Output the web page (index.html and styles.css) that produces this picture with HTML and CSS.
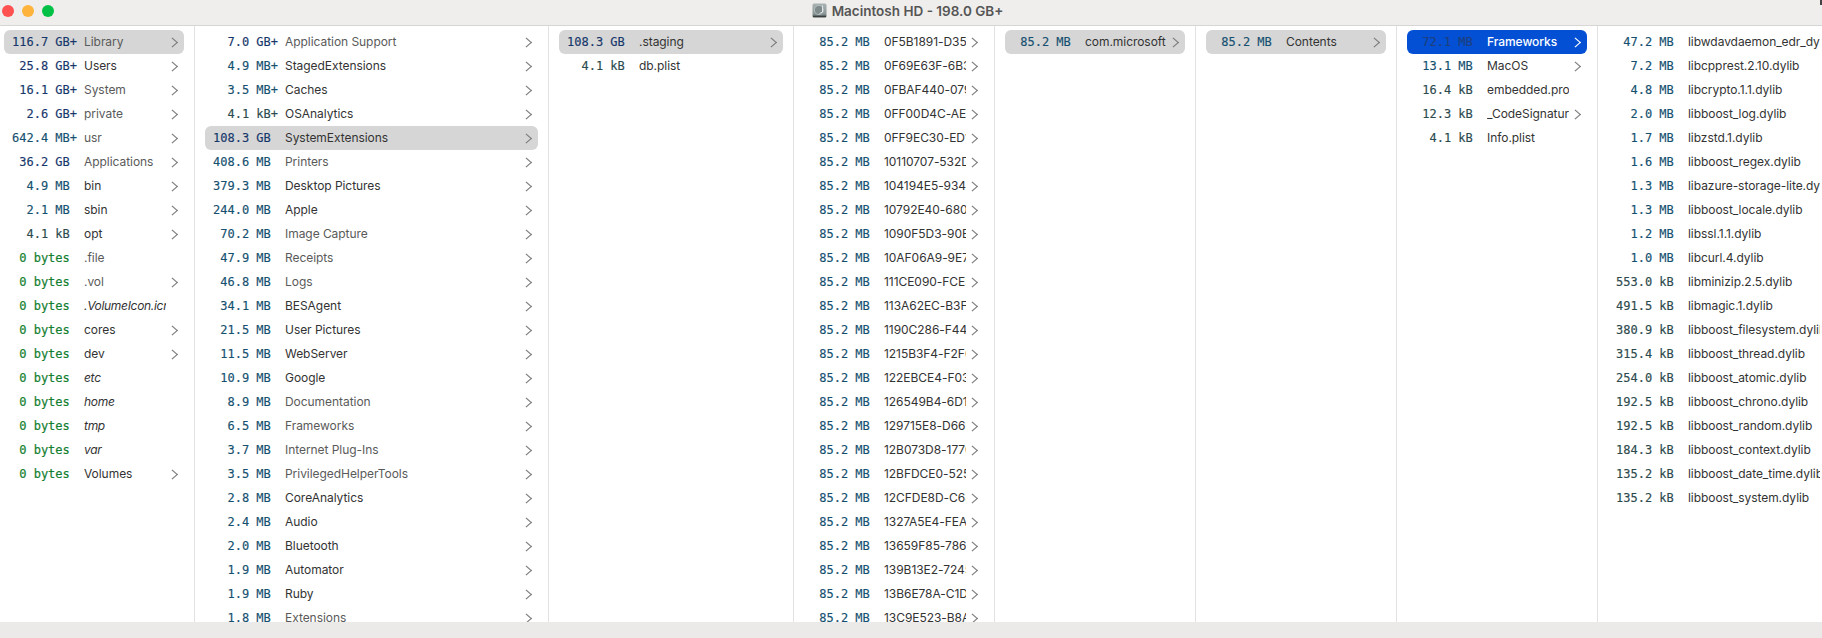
FILE: index.html
```html
<!DOCTYPE html>
<html lang="en">
<head>
<meta charset="utf-8">
<title>Macintosh HD - 198.0 GB+</title>
<link rel="stylesheet" href="styles.css">
</head>
<body>
<div class="window">
<header class="titlebar">
  <div class="lights"><span class="light red"></span><span class="light amber"></span><span class="light green"></span></div>
  <div class="title">
    <svg class="disk" width="15" height="15" viewBox="0 0 15 15"><defs><linearGradient id="dg" x1="0" y1="0" x2="0" y2="1"><stop offset="0" stop-color="#a9b3b3"/><stop offset=".75" stop-color="#8b9696"/><stop offset="1" stop-color="#4a5252"/></linearGradient></defs><rect x=".5" y=".5" width="14" height="14" rx="1.5" fill="url(#dg)"/><circle cx="7" cy="7" r="4.6" fill="#7f8a8a" stroke="#c2caca" stroke-width=".7"/><path d="M10.5 2.5V9L7.5 10.5" fill="none" stroke="#e2e6e6" stroke-width="1"/><rect x="1" y="12.8" width="13" height="1.2" fill="#3a4040"/></svg>
    <span>Macintosh HD - 198.0 GB+</span>
  </div>
  <span class="corner"></span>
</header>
<main class="browser">
<section class="col first">
<div class="row pill"><span class="size gb">116.7 GB+</span><span class="name dim">Library</span><i class="chev"></i></div>
<div class="row"><span class="size gb"> 25.8 GB+</span><span class="name">Users</span><i class="chev"></i></div>
<div class="row"><span class="size gb"> 16.1 GB+</span><span class="name dim">System</span><i class="chev"></i></div>
<div class="row"><span class="size gb">  2.6 GB+</span><span class="name dim">private</span><i class="chev"></i></div>
<div class="row"><span class="size mb">642.4 MB+</span><span class="name dim">usr</span><i class="chev"></i></div>
<div class="row"><span class="size gb"> 36.2 GB</span><span class="name dim">Applications</span><i class="chev"></i></div>
<div class="row"><span class="size mb">  4.9 MB</span><span class="name">bin</span><i class="chev"></i></div>
<div class="row"><span class="size mb">  2.1 MB</span><span class="name">sbin</span><i class="chev"></i></div>
<div class="row"><span class="size kb">  4.1 kB</span><span class="name">opt</span><i class="chev"></i></div>
<div class="row"><span class="size zero"> 0 bytes</span><span class="name dim">.file</span></div>
<div class="row"><span class="size zero"> 0 bytes</span><span class="name dim">.vol</span><i class="chev"></i></div>
<div class="row"><span class="size zero"> 0 bytes</span><span class="name it">.VolumeIcon.icns</span></div>
<div class="row"><span class="size zero"> 0 bytes</span><span class="name">cores</span><i class="chev"></i></div>
<div class="row"><span class="size zero"> 0 bytes</span><span class="name">dev</span><i class="chev"></i></div>
<div class="row"><span class="size zero"> 0 bytes</span><span class="name it">etc</span></div>
<div class="row"><span class="size zero"> 0 bytes</span><span class="name it">home</span></div>
<div class="row"><span class="size zero"> 0 bytes</span><span class="name it">tmp</span></div>
<div class="row"><span class="size zero"> 0 bytes</span><span class="name it">var</span></div>
<div class="row"><span class="size zero"> 0 bytes</span><span class="name">Volumes</span><i class="chev"></i></div>
</section>
<section class="col c2">
<div class="row"><span class="size gb">  7.0 GB+</span><span class="name dim">Application Support</span><i class="chev"></i></div>
<div class="row"><span class="size mb">  4.9 MB+</span><span class="name">StagedExtensions</span><i class="chev"></i></div>
<div class="row"><span class="size mb">  3.5 MB+</span><span class="name">Caches</span><i class="chev"></i></div>
<div class="row"><span class="size kb">  4.1 kB+</span><span class="name">OSAnalytics</span><i class="chev"></i></div>
<div class="row pill"><span class="size gb">108.3 GB</span><span class="name">SystemExtensions</span><i class="chev"></i></div>
<div class="row"><span class="size mb">408.6 MB</span><span class="name dim">Printers</span><i class="chev"></i></div>
<div class="row"><span class="size mb">379.3 MB</span><span class="name">Desktop Pictures</span><i class="chev"></i></div>
<div class="row"><span class="size mb">244.0 MB</span><span class="name">Apple</span><i class="chev"></i></div>
<div class="row"><span class="size mb"> 70.2 MB</span><span class="name dim">Image Capture</span><i class="chev"></i></div>
<div class="row"><span class="size mb"> 47.9 MB</span><span class="name dim">Receipts</span><i class="chev"></i></div>
<div class="row"><span class="size mb"> 46.8 MB</span><span class="name dim">Logs</span><i class="chev"></i></div>
<div class="row"><span class="size mb"> 34.1 MB</span><span class="name">BESAgent</span><i class="chev"></i></div>
<div class="row"><span class="size mb"> 21.5 MB</span><span class="name">User Pictures</span><i class="chev"></i></div>
<div class="row"><span class="size mb"> 11.5 MB</span><span class="name">WebServer</span><i class="chev"></i></div>
<div class="row"><span class="size mb"> 10.9 MB</span><span class="name">Google</span><i class="chev"></i></div>
<div class="row"><span class="size mb">  8.9 MB</span><span class="name dim">Documentation</span><i class="chev"></i></div>
<div class="row"><span class="size mb">  6.5 MB</span><span class="name dim">Frameworks</span><i class="chev"></i></div>
<div class="row"><span class="size mb">  3.7 MB</span><span class="name dim">Internet Plug-Ins</span><i class="chev"></i></div>
<div class="row"><span class="size mb">  3.5 MB</span><span class="name dim">PrivilegedHelperTools</span><i class="chev"></i></div>
<div class="row"><span class="size mb">  2.8 MB</span><span class="name">CoreAnalytics</span><i class="chev"></i></div>
<div class="row"><span class="size mb">  2.4 MB</span><span class="name">Audio</span><i class="chev"></i></div>
<div class="row"><span class="size mb">  2.0 MB</span><span class="name">Bluetooth</span><i class="chev"></i></div>
<div class="row"><span class="size mb">  1.9 MB</span><span class="name">Automator</span><i class="chev"></i></div>
<div class="row"><span class="size mb">  1.9 MB</span><span class="name">Ruby</span><i class="chev"></i></div>
<div class="row"><span class="size mb">  1.8 MB</span><span class="name dim">Extensions</span><i class="chev"></i></div>
</section>
<section class="col c3">
<div class="row pill"><span class="size gb">108.3 GB</span><span class="name">.staging</span><i class="chev"></i></div>
<div class="row"><span class="size kb">  4.1 kB</span><span class="name">db.plist</span></div>
</section>
<section class="col c4">
<div class="row"><span class="size mb"> 85.2 MB</span><span class="name">0F5B1891-D35A-4C10</span><i class="chev"></i></div>
<div class="row"><span class="size mb"> 85.2 MB</span><span class="name">0F69E63F-6B3C-4A21</span><i class="chev"></i></div>
<div class="row"><span class="size mb"> 85.2 MB</span><span class="name">0FBAF440-0795-4E32</span><i class="chev"></i></div>
<div class="row"><span class="size mb"> 85.2 MB</span><span class="name">0FF00D4C-AE77-4B43</span><i class="chev"></i></div>
<div class="row"><span class="size mb"> 85.2 MB</span><span class="name">0FF9EC30-ED15-4D54</span><i class="chev"></i></div>
<div class="row"><span class="size mb"> 85.2 MB</span><span class="name">10110707-532D-4F65</span><i class="chev"></i></div>
<div class="row"><span class="size mb"> 85.2 MB</span><span class="name">104194E5-9344-4A76</span><i class="chev"></i></div>
<div class="row"><span class="size mb"> 85.2 MB</span><span class="name">10792E40-680C-4B87</span><i class="chev"></i></div>
<div class="row"><span class="size mb"> 85.2 MB</span><span class="name">1090F5D3-90E1-4C98</span><i class="chev"></i></div>
<div class="row"><span class="size mb"> 85.2 MB</span><span class="name">10AF06A9-9E72-4DA9</span><i class="chev"></i></div>
<div class="row"><span class="size mb"> 85.2 MB</span><span class="name">111CE090-FCE3-4EB0</span><i class="chev"></i></div>
<div class="row"><span class="size mb"> 85.2 MB</span><span class="name">113A62EC-B3F4-4FC1</span><i class="chev"></i></div>
<div class="row"><span class="size mb"> 85.2 MB</span><span class="name">1190C286-F445-4AD2</span><i class="chev"></i></div>
<div class="row"><span class="size mb"> 85.2 MB</span><span class="name">1215B3F4-F2F6-4BE3</span><i class="chev"></i></div>
<div class="row"><span class="size mb"> 85.2 MB</span><span class="name">122EBCE4-F037-4CF4</span><i class="chev"></i></div>
<div class="row"><span class="size mb"> 85.2 MB</span><span class="name">126549B4-6D18-4D05</span><i class="chev"></i></div>
<div class="row"><span class="size mb"> 85.2 MB</span><span class="name">129715E8-D669-4E16</span><i class="chev"></i></div>
<div class="row"><span class="size mb"> 85.2 MB</span><span class="name">12B073D8-1770-4F27</span><i class="chev"></i></div>
<div class="row"><span class="size mb"> 85.2 MB</span><span class="name">12BFDCE0-5251-4A38</span><i class="chev"></i></div>
<div class="row"><span class="size mb"> 85.2 MB</span><span class="name">12CFDE8D-C682-4B49</span><i class="chev"></i></div>
<div class="row"><span class="size mb"> 85.2 MB</span><span class="name">1327A5E4-FEA3-4C50</span><i class="chev"></i></div>
<div class="row"><span class="size mb"> 85.2 MB</span><span class="name">13659F85-7864-4D61</span><i class="chev"></i></div>
<div class="row"><span class="size mb"> 85.2 MB</span><span class="name">139B13E2-7245-4E72</span><i class="chev"></i></div>
<div class="row"><span class="size mb"> 85.2 MB</span><span class="name">13B6E78A-C1D6-4F83</span><i class="chev"></i></div>
<div class="row"><span class="size mb"> 85.2 MB</span><span class="name">13C9E523-B8A7-4A94</span><i class="chev"></i></div>
</section>
<section class="col c5">
<div class="row pill"><span class="size mb"> 85.2 MB</span><span class="name">com.microsoft</span><i class="chev"></i></div>
</section>
<section class="col c6">
<div class="row pill"><span class="size mb"> 85.2 MB</span><span class="name">Contents</span><i class="chev"></i></div>
</section>
<section class="col c7">
<div class="row active"><span class="size mb"> 72.1 MB</span><span class="name">Frameworks</span><i class="chev"></i></div>
<div class="row"><span class="size mb"> 13.1 MB</span><span class="name">MacOS</span><i class="chev"></i></div>
<div class="row"><span class="size kb"> 16.4 kB</span><span class="name">embedded.provisionprofile</span></div>
<div class="row"><span class="size kb"> 12.3 kB</span><span class="name">_CodeSignature</span><i class="chev"></i></div>
<div class="row"><span class="size kb">  4.1 kB</span><span class="name">Info.plist</span></div>
</section>
<section class="col last">
<div class="row"><span class="size mb"> 47.2 MB</span><span class="name">libwdavdaemon_edr_dylib.dylib</span></div>
<div class="row"><span class="size mb">  7.2 MB</span><span class="name">libcpprest.2.10.dylib</span></div>
<div class="row"><span class="size mb">  4.8 MB</span><span class="name">libcrypto.1.1.dylib</span></div>
<div class="row"><span class="size mb">  2.0 MB</span><span class="name">libboost_log.dylib</span></div>
<div class="row"><span class="size mb">  1.7 MB</span><span class="name">libzstd.1.dylib</span></div>
<div class="row"><span class="size mb">  1.6 MB</span><span class="name">libboost_regex.dylib</span></div>
<div class="row"><span class="size mb">  1.3 MB</span><span class="name">libazure-storage-lite.dylib</span></div>
<div class="row"><span class="size mb">  1.3 MB</span><span class="name">libboost_locale.dylib</span></div>
<div class="row"><span class="size mb">  1.2 MB</span><span class="name">libssl.1.1.dylib</span></div>
<div class="row"><span class="size mb">  1.0 MB</span><span class="name">libcurl.4.dylib</span></div>
<div class="row"><span class="size kb">553.0 kB</span><span class="name">libminizip.2.5.dylib</span></div>
<div class="row"><span class="size kb">491.5 kB</span><span class="name">libmagic.1.dylib</span></div>
<div class="row"><span class="size kb">380.9 kB</span><span class="name">libboost_filesystem.dylib</span></div>
<div class="row"><span class="size kb">315.4 kB</span><span class="name">libboost_thread.dylib</span></div>
<div class="row"><span class="size kb">254.0 kB</span><span class="name">libboost_atomic.dylib</span></div>
<div class="row"><span class="size kb">192.5 kB</span><span class="name">libboost_chrono.dylib</span></div>
<div class="row"><span class="size kb">192.5 kB</span><span class="name">libboost_random.dylib</span></div>
<div class="row"><span class="size kb">184.3 kB</span><span class="name">libboost_context.dylib</span></div>
<div class="row"><span class="size kb">135.2 kB</span><span class="name">libboost_date_time.dylib</span></div>
<div class="row"><span class="size kb">135.2 kB</span><span class="name">libboost_system.dylib</span></div>
</section>
</main>
<footer class="statusbar"></footer>
</div>
</body>
</html>
```
FILE: styles.css
```css
* { box-sizing: border-box; }
html, body { margin: 0; height: 100%; overflow: hidden; background: #fff; }
.window { width: 1822px; height: 638px; display: flex; flex-direction: column; font-family: "Inter", "Liberation Sans", sans-serif; }

.titlebar { position: relative; flex: 0 0 26px; background: #efeeec; border-bottom: 1px solid #d6d6d4; display: flex; align-items: center; justify-content: center; padding-bottom: 4px; }
.lights { position: absolute; left: 2px; top: 5px; display: flex; gap: 8px; }
.light { width: 12px; height: 12px; border-radius: 50%; }
.red { background: #fe5150; }
.amber { background: #feb43c; }
.green { background: #03c146; }
.title { display: flex; align-items: center; gap: 5px; font-size: 13.5px; font-weight: 600; color: #555; margin-right: 7px; }
.disk { display: block; }
.corner { position: absolute; right: 0; top: 0; width: 2px; height: 5px; background: #444; }

.browser { flex: 1 1 auto; display: flex; overflow: hidden; min-height: 0; }
.col { flex: 0 0 auto; height: 100%; overflow: hidden; padding: 4px 10px 0; border-right: 1px solid #e2e2e2; }
.first { width: 195px; padding-left: 4px; }
.c2 { width: 354px; }
.c3 { width: 245px; }
.c4 { width: 201px; }
.c5 { width: 201px; }
.c6 { width: 201px; }
.c7 { width: 201px; }
.last { flex: 1 1 0; min-width: 0; border-right: 0; padding-right: 2px; }

.row { position: relative; height: 24px; display: flex; align-items: center; padding: 0 18px 1px 8px; border-radius: 6px; font-size: 12px; line-height: 24px; }
.last .row { padding-right: 0; }
.pill { background: #d6d6d6; }
.active { background: #0450d5; }
.size { flex: 0 0 72px; width: 72px; white-space: pre; font-family: "DejaVu Sans Mono", "Liberation Mono", monospace; font-size: 12px; -webkit-text-stroke: .15px currentColor; }
.gb { color: #17376b; }
.mb { color: #15506f; }
.kb { color: #2c4a4d; }
.zero { color: #138030; -webkit-text-stroke: .2px currentColor; }
.active .size { color: #1d3f7c; }
.name { flex: 1 1 0; min-width: 0; overflow: hidden; white-space: nowrap; color: #333; letter-spacing: -.05px; }
.dim { color: #5a5a5a; }
.it { font-style: italic; letter-spacing: -.3px; }
.active .name { color: #fff; font-weight: 500; }
.chev { position: absolute; right: 8px; top: 9px; width: 6.7px; height: 6.7px; border-top: 1px solid #7c7c7c; border-right: 1px solid #7c7c7c; transform: scaleX(1.15) rotate(45deg); }
.active .chev { border-color: #fff; }

.statusbar { flex: 0 0 16px; background: #ebeae8; }
```
